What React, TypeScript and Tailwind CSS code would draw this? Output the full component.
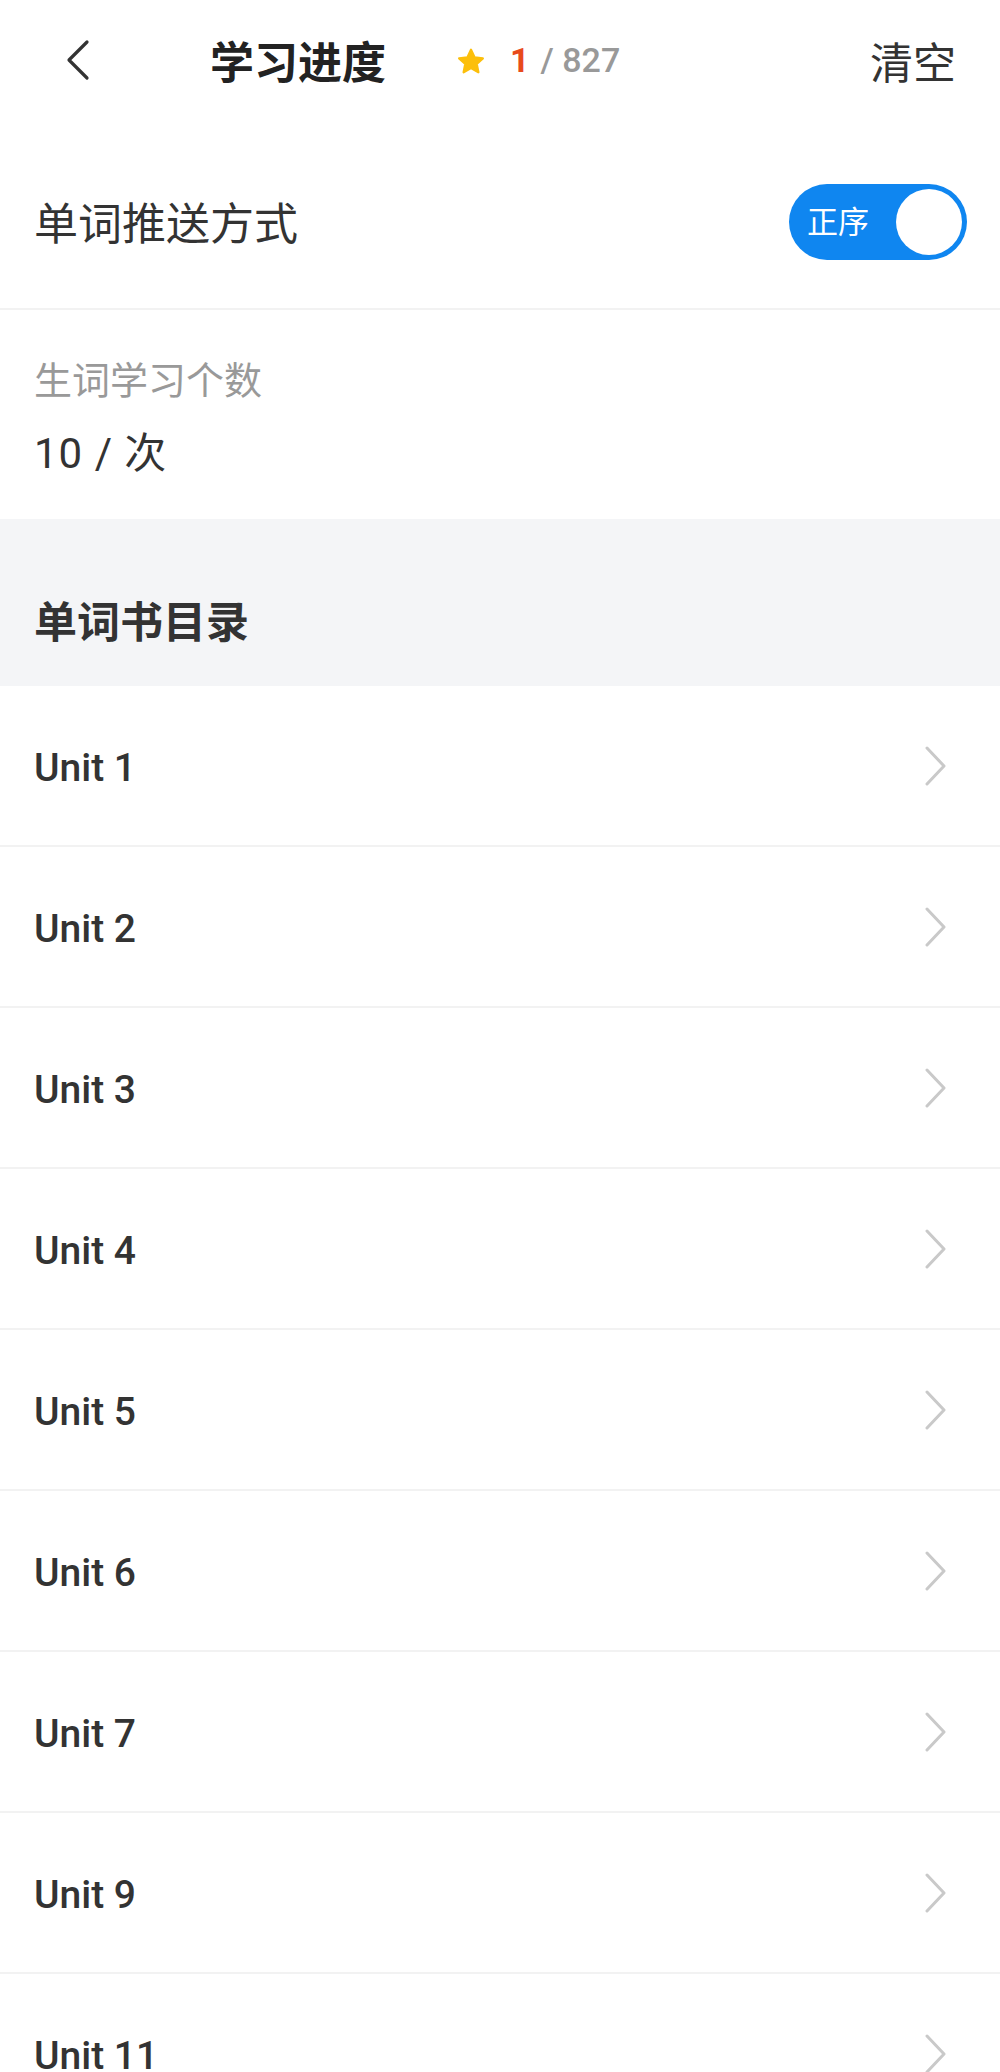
import React from "react";

const Chevron = ({ className }: { className?: string }) => (
  <svg viewBox="0 0 26 40" className={className} fill="none">
    <path d="M5 2 L22 20 L5 38" stroke="currentColor" strokeWidth="3" strokeLinecap="round" strokeLinejoin="round" />
  </svg>
);

const units = ["Unit 1", "Unit 2", "Unit 3", "Unit 4", "Unit 5", "Unit 6", "Unit 7", "Unit 9", "Unit 11"];

export default function App() {
  return (
    <div
      className="w-[1000px] h-[2072px] overflow-hidden bg-white text-[#333]"
      style={{ fontFamily: "Roboto, 'Noto Sans CJK SC', sans-serif" }}
    >
      {/* header */}
      <div className="h-[124px] flex items-center">
        <div className="ml-[64px] w-[28px] h-[42px] text-[#333] -mt-[4px]">
          <svg viewBox="0 0 28 42" className="w-full h-full" fill="none">
            <path d="M23 3 L5 21 L23 39" stroke="currentColor" strokeWidth="3.2" strokeLinecap="round" strokeLinejoin="round" />
          </svg>
        </div>
        <div className="ml-[118px] mt-[4px] text-[44px] font-bold text-[#222] leading-none">学习进度</div>
        <div className="ml-[70px] flex items-center -mt-[4px]">
          <svg viewBox="0 0 24 24" className="w-[30px] h-[30px] mt-[4px]">
            <path
              d="M12 2.2 L14.9 8.3 L21.5 9.1 L16.6 13.6 L17.9 20.2 L12 16.9 L6.1 20.2 L7.4 13.6 L2.5 9.1 L9.1 8.3 Z"
              fill="#fcbf0b"
              stroke="#fcbf0b"
              strokeWidth="1.8"
              strokeLinejoin="round"
            />
          </svg>
          <span className="ml-[24px] text-[34px] font-bold text-[#e84a1b] leading-none">1</span>
          <span className="ml-[11px] text-[34px] font-medium text-[#999] leading-none">/ 827</span>
        </div>
        <div className="ml-auto mr-[44px] mt-[4px] text-[43px] text-[#333] leading-none">清空</div>
      </div>

      {/* push mode */}
      <div className="h-[186px] pt-[12px] flex items-center justify-between px-[34px] border-b-2 border-[#f2f2f2]">
        <div className="mt-[6px] text-[44px] text-[#333] leading-none">单词推送方式</div>
        <div className="w-[178px] h-[76px] rounded-full bg-[#0f86f0] flex items-center pl-[18px] pr-[5px] mr-[-1px]">
          <span className="text-[31px] text-white leading-none">正序</span>
          <div className="ml-auto w-[66px] h-[66px] rounded-full bg-white" />
        </div>
      </div>

      {/* count */}
      <div className="h-[209px] px-[34px] pt-[49px]">
        <div className="text-[38px] text-[#999] leading-[44px]">生词学习个数</div>
        <div className="mt-[29px] text-[42px] text-[#333] leading-[44px] tracking-[1px]">10 / 次</div>
      </div>

      {/* section title */}
      <div className="h-[167px] bg-[#f4f5f7] px-[34px] pt-[82px]">
        <div className="text-[43px] font-bold text-[#333] leading-[44px]">单词书目录</div>
      </div>

      {/* units */}
      <div>
        {units.map((u) => (
          <div key={u} className="h-[161px] flex items-center justify-between pl-[34px] pr-[52px] border-b-2 border-[#f2f2f2]">
            <span className="mt-[5px] text-[39px] font-medium text-[#333] leading-none">{u}</span>
            <Chevron className="w-[26px] h-[40px] text-[#c9c9c9]" />
          </div>
        ))}
      </div>
    </div>
  );
}
